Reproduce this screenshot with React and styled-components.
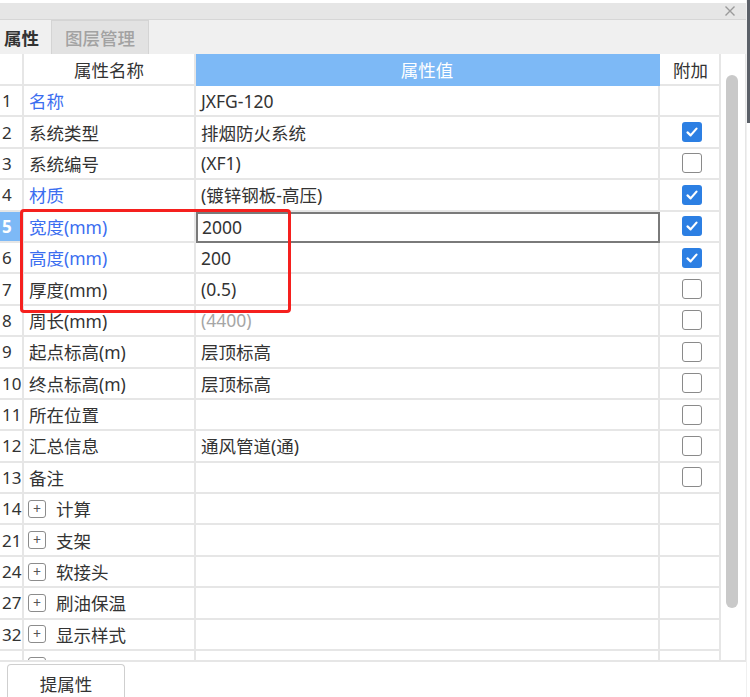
import styled, { createGlobalStyle } from 'styled-components';

const GlobalStyle = createGlobalStyle`
  body {
    margin: 0;
    background: #ffffff;
    font-family: "Noto Sans", "Noto Sans CJK SC", sans-serif;
  }
`;

const rows = [
  { no: 1, name: '名称', value: 'JXFG-120', blue: true },
  { no: 2, name: '系统类型', value: '排烟防火系统', check: true },
  { no: 3, name: '系统编号', value: '(XF1)', check: false },
  { no: 4, name: '材质', value: '(镀锌钢板-高压)', blue: true, check: true },
  { no: 5, name: '宽度(mm)', value: '2000', blue: true, check: true, active: true },
  { no: 6, name: '高度(mm)', value: '200', blue: true, check: true },
  { no: 7, name: '厚度(mm)', value: '(0.5)', check: false },
  { no: 8, name: '周长(mm)', value: '(4400)', muted: true, check: false },
  { no: 9, name: '起点标高(m)', value: '层顶标高', check: false },
  { no: 10, name: '终点标高(m)', value: '层顶标高', check: false },
  { no: 11, name: '所在位置', value: '', check: false },
  { no: 12, name: '汇总信息', value: '通风管道(通)', check: false },
  { no: 13, name: '备注', value: '', check: false },
  { no: 14, name: '计算', group: true },
  { no: 21, name: '支架', group: true },
  { no: 24, name: '软接头', group: true },
  { no: 27, name: '刷油保温', group: true },
  { no: 32, name: '显示样式', group: true },
  // next group row is scrolled out; only the top of its expander shows
  { no: '', name: '', group: true },
];

function CheckBox({ checked }) {
  return (
    <Box $checked={checked}>
      {checked && (
        <svg width="14" height="14" viewBox="0 0 14 14">
          <path d="M2.5 7.4 L5.6 10.4 L11.5 3.6" fill="none" stroke="#fff" strokeWidth="2.2" strokeLinecap="round" strokeLinejoin="round" />
        </svg>
      )}
    </Box>
  );
}

export default function App() {
  return (
    <>
      <GlobalStyle />
      <Page>
        <Panel>
          <TitleBar>
            <Close>
              <svg width="12" height="12" viewBox="0 0 12 12">
                <path d="M1.5 1.5 L10.5 10.5 M10.5 1.5 L1.5 10.5" stroke="#9a9a9a" strokeWidth="1.4" />
              </svg>
            </Close>
          </TitleBar>
          <Tabs>
            <Tab $active>属性</Tab>
            <Tab>图层管理</Tab>
          </Tabs>
          <TableWrap>
            <Table>
              <HeadRow>
                <HeadCell />
                <HeadCell>属性名称</HeadCell>
                <HeadCell $selected>属性值</HeadCell>
                <HeadCell>附加</HeadCell>
              </HeadRow>
              {rows.map((r, i) => (
                <Row key={i}>
                  <NoCell $active={r.active}>{r.no}</NoCell>
                  <NameCell $blue={r.blue}>
                    {r.group && <Plus>+</Plus>}
                    {r.name}
                  </NameCell>
                  <ValueCell $active={r.active} $muted={r.muted}>{r.value}</ValueCell>
                  <AddCell>{r.check !== undefined && <CheckBox checked={r.check} />}</AddCell>
                </Row>
              ))}
              <Marker />
            </Table>
            <ScrollTrack>
              <Thumb />
            </ScrollTrack>
          </TableWrap>
          <Footer>
            <FooterButton>提属性</FooterButton>
          </Footer>
        </Panel>
        <Edge>
          <EdgeDark />
        </Edge>
      </Page>
    </>
  );
}

const Page = styled.div`
  display: flex;
  width: 750px;
  height: 697px;
  overflow: hidden;
  background: #fff;
`;
const Panel = styled.div`
  width: 746px;
  display: flex;
  flex-direction: column;
  & > * { flex-shrink: 0; }
`;
const Edge = styled.div`
  width: 4px;
  border-left: 1px solid #f0f0f0;
`;
const EdgeDark = styled.div`
  height: 123px;
  background: #5b6068;
`;
const TitleBar = styled.div`
  height: 16px;
  margin-top: 3px;
  background: #e6e6e6;
  border-bottom: 1px solid #d6d6d6;
  display: flex;
  justify-content: flex-end;
  align-items: center;
  padding-right: 10px;
`;
const Close = styled.div`
  display: flex;
  align-items: center;
`;
const Tabs = styled.div`
  height: 34px;
  background: #f0f0f0;
  display: flex;
  align-items: stretch;
`;
const Tab = styled.div`
  display: flex;
  align-items: center;
  padding: ${(p) => (p.$active ? '0 12px 0 4px' : '0 13px')};
  font-size: 17.5px;
  font-weight: ${(p) => (p.$active ? 700 : 500)};
  color: ${(p) => (p.$active ? '#333' : '#a2a2a2')};
  background: ${(p) => (p.$active ? '#f0f0f0' : '#e2e2e2')};
  border: ${(p) => (p.$active ? 'none' : '1px solid #d4d4d4')};
  border-bottom: none;
`;
const TableWrap = styled.div`
  display: flex;
  height: 606px;
  border-bottom: 2px solid #e6e6e6;
  border-right: 1px solid #e6e6e6;
`;
const Table = styled.div`
  position: relative;
  width: 721px;
  overflow: hidden;
  border-right: 2px solid #e6e6e6;
  box-sizing: border-box;
`;
const Grid = styled.div`
  display: grid;
  grid-template-columns: 24px 172px 464px 61px;
`;
const HeadRow = styled(Grid)`
  height: 32px;
`;
const HeadCell = styled.div`
  display: flex;
  align-items: center;
  justify-content: center;
  font-size: 17.5px;
  color: ${(p) => (p.$selected ? '#fff' : '#333')};
  background: ${(p) => (p.$selected ? '#7db9f6' : '#fff')};
  border-right: 2px solid ${(p) => (p.$selected ? '#7db9f6' : '#e6e6e6')};
  border-bottom: 2px solid ${(p) => (p.$selected ? '#7db9f6' : '#e6e6e6')};
  &:last-child { border-right: none; }
`;
const Row = styled(Grid)`
  height: 31.4px;
`;
const Cell = styled.div`
  display: flex;
  align-items: center;
  font-size: 17.5px;
  color: #333;
  white-space: nowrap;
  overflow: hidden;
  border-right: 2px solid #e6e6e6;
  border-bottom: 2px solid #e6e6e6;
  box-sizing: border-box;
`;
const NoCell = styled(Cell)`
  padding-left: 2px;
  font-size: 17px;
  color: ${(p) => (p.$active ? '#fff' : '#333')};
  background: ${(p) => (p.$active ? '#7db9f6' : '#fff')};
  font-weight: ${(p) => (p.$active ? 700 : 400)};
`;
const NameCell = styled(Cell)`
  padding-left: 5px;
  color: ${(p) => (p.$blue ? '#3b6ef0' : '#333')};
`;
const ValueCell = styled(Cell)`
  padding-left: 5px;
  color: ${(p) => (p.$muted ? '#a6a6a6' : '#333')};
  ${(p) => p.$active && `
    border: 2px solid #7a7a7a;
    padding-left: 4px;
  `}
`;
const AddCell = styled(Cell)`
  justify-content: center;
  border-right: none;
  padding-left: 3px;
`;
const Box = styled.div`
  width: 20px;
  height: 20px;
  box-sizing: border-box;
  border-radius: 3px;
  display: flex;
  align-items: center;
  justify-content: center;
  background: ${(p) => (p.$checked ? '#2c7fe3' : '#fff')};
  border: ${(p) => (p.$checked ? 'none' : '1.5px solid #8a8a8a')};
`;
const Plus = styled.span`
  width: 18px;
  height: 18px;
  box-sizing: border-box;
  border: 1.5px solid #8c8c8c;
  border-radius: 3px;
  display: inline-flex;
  align-items: center;
  justify-content: center;
  font-size: 14px;
  line-height: 1;
  color: #555;
  margin: 0 10px 0 -1px;
`;
const Marker = styled.div`
  position: absolute;
  left: 20px;
  top: 155px;
  width: 271px;
  height: 104px;
  box-sizing: border-box;
  border: 3px solid #f5201e;
  border-radius: 4px;
  pointer-events: none;
`;
const ScrollTrack = styled.div`
  width: 24px;
  padding: 21px 0 0 5px;
  box-sizing: border-box;
`;
const Thumb = styled.div`
  width: 12px;
  height: 533px;
  background: #c9c9c9;
  border-radius: 6px;
`;
const Footer = styled.div`
  flex: 1 1 auto;
  min-height: 0;
  overflow: hidden;
  padding: 2px 0 0 7px;
`;
const FooterButton = styled.div`
  width: 118px;
  height: 40px;
  box-sizing: border-box;
  border: 1px solid #cfcfcf;
  border-bottom: none;
  border-radius: 4px 4px 0 0;
  display: flex;
  justify-content: center;
  padding-top: 6px;
  font-size: 17.5px;
  color: #333;
`;
